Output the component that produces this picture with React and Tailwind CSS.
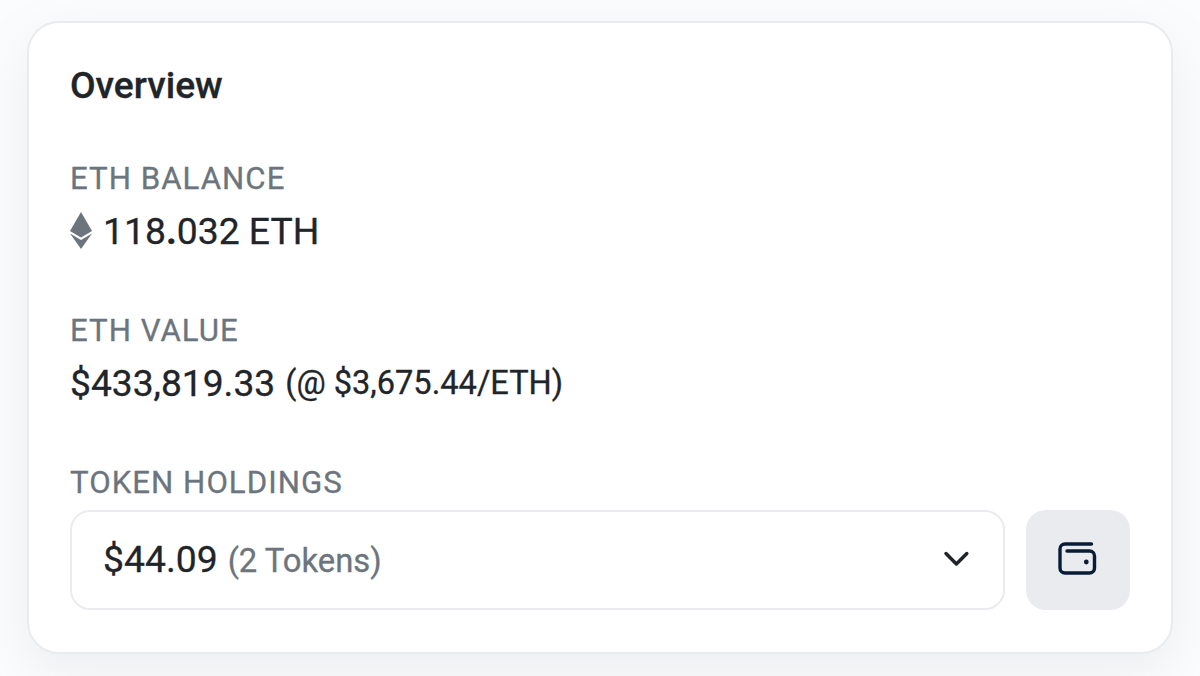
const label = "text-[#6c757d] text-[31.2px] leading-[48px] tracking-[1.03px] whitespace-nowrap";

export default function App() {
  return (
    <main className="h-[676px] w-[1200px] overflow-hidden bg-[#fbfcfd] px-[27px] pt-[21px] text-[#212529] font-['Roboto',sans-serif] [-webkit-text-stroke:0.3px_currentColor]">
      <section className="flex h-[633px] w-[1146px] flex-col rounded-[32px] border-2 border-[#e9ebee] bg-white px-[41px] pt-[34px] shadow-[0_16px_48px_rgba(150,157,170,0.15)]">
        <h1 className="h-[56px] text-[37.2px] leading-[56px] font-medium">Overview</h1>
        <div className="mt-[42px] h-[104px]">
          <h2 className={label}>ETH BALANCE</h2>
          <div className="flex h-[56px] items-center text-[37.3px] leading-[56px]">
            <svg className="mr-[11px] h-[38px] w-[22px]" viewBox="0 0 22 38">
              <path d="M11 0 0 19 11 25.5 22 19Z" fill="#6c757d" />
              <path d="M0 21.5 11 28 22 21.5 11 37Z" fill="#6c757d" />
            </svg>
            <span>118<b>.</b>032 ETH</span>
          </div>
        </div>
        <div className="mt-[48px] h-[104px]">
          <h2 className={label}>ETH VALUE</h2>
          <div className="flex h-[56px] items-center gap-[10px] leading-[56px]">
            <span className="text-[37.2px]">$433,819.33</span>
            <span className="text-[32.6px]">(@ $3,675.44/ETH)</span>
          </div>
        </div>
        <div className="mt-[48px]">
          <h2 className={label}>TOKEN HOLDINGS</h2>
          <div className="mt-[3px] flex gap-[21px]">
            <button className="flex h-[100px] w-[935px] items-center rounded-[20px] border-2 border-[#e9ebee] pr-[32px] pl-[31px]">
              <span className="flex items-baseline gap-[10px]">
                <span className="text-[37.3px]">$44.09</span>
                <span className="text-[32.8px] text-[#6c757d]">(2 Tokens)</span>
              </span>
              <svg className="ml-auto h-[28px] w-[28px]" viewBox="0 0 28 28" fill="none" stroke="#212529" strokeWidth="3.5" strokeLinecap="round" strokeLinejoin="round"><path d="M3 7.5 13.4 17.9 23.8 7.5" /></svg>
            </button>
            <button className="flex h-[100px] w-[104px] items-center justify-center rounded-[20px] bg-[#e9ebef]">
              <svg className="h-[40px] w-[40px]" viewBox="1058 540 40 40" fill="none" stroke="#081d35" strokeWidth="3.4" strokeLinecap="round" strokeLinejoin="round">
                <path d="M1091.5 544H1065a5 5 0 0 0-5 5v19a5 5 0 0 0 5 5h24.5a5 5 0 0 0 5-5v-12a5 5 0 0 0-5-5H1067" />
                <circle cx="1086.3" cy="562" r="2.4" fill="#081d35" stroke="none" />
              </svg>
            </button>
          </div>
        </div>
      </section>
    </main>
  );
}
